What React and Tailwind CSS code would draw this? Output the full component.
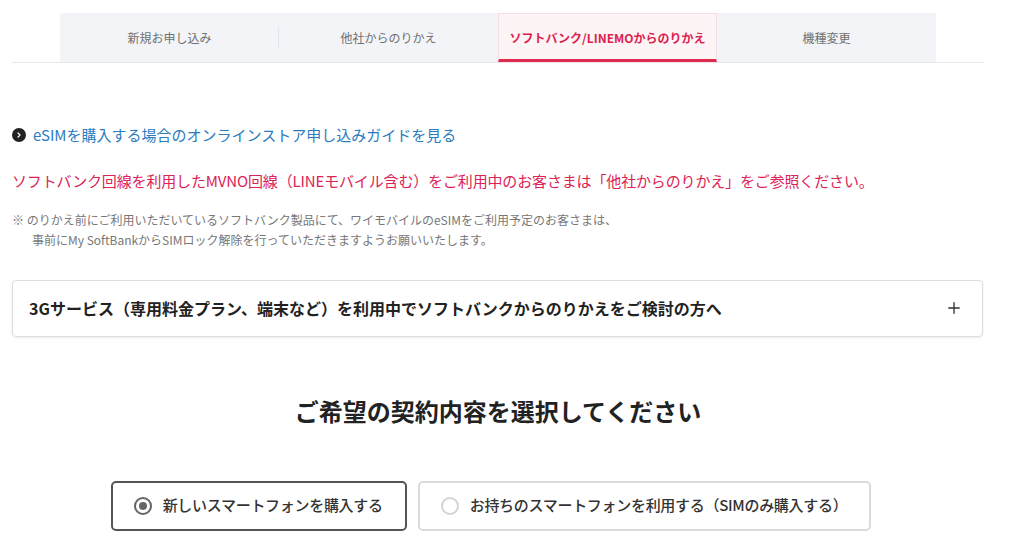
import { Plus } from 'lucide-react';

const TABS = [
  { key: 'new', label: '新規お申し込み' },
  { key: 'mnp', label: '他社からのりかえ' },
  { key: 'sb', label: 'ソフトバンク/LINEMOからのりかえ', active: true },
  { key: 'change', label: '機種変更' },
];

const FONT = { fontFamily: '"Noto Sans CJK JP", "Noto Sans", sans-serif' };

function Tabs() {
  return (
    <div className="border-b border-[#e6e8eb]">
      <ul className="mx-[48px] flex h-[49px] bg-[#f2f4f7]">
        {TABS.map((tab, i) => (
          <li key={tab.key} className="relative flex-1">
            {tab.active ? (
              <div className="flex h-full items-center justify-center border-x border-t border-[#f5dfe4] border-b-[3px] border-b-[#e0294f] bg-[#fdf4f5] pt-[2px] text-[12px] font-bold text-[#dc2350]">
                {tab.label}
              </div>
            ) : (
              <div className="flex h-full items-center justify-center text-[12px] text-[#707070]">{tab.label}</div>
            )}
            {i === 0 ? <span className="absolute right-0 top-[15px] h-[19px] w-px bg-[#dfe2e6]" aria-hidden /> : null}
          </li>
        ))}
      </ul>
    </div>
  );
}

function Radio({ checked, label }) {
  return (
    <label
      className={
        'flex h-[50px] items-center gap-[11px] whitespace-nowrap rounded-[5px] border-2 pl-[21px] pr-[22px] ' +
        (checked ? 'border-[#555]' : 'border-[#dadada]')
      }
    >
      <span
        className={
          'flex size-[18px] shrink-0 items-center justify-center rounded-full border-2 ' +
          (checked ? 'border-[#666]' : 'border-[#d4d4d4]')
        }
      >
        {checked ? <span className="size-[8px] rounded-full bg-[#666]" /> : null}
      </span>
      <span className="text-[15px] font-medium tracking-[-0.02em] text-[#333]">{label}</span>
    </label>
  );
}

export default function App() {
  return (
    <div className="min-h-[556px] bg-white pt-[13px]" style={FONT}>
      <div className="mx-[12px] w-[972px]">
        <Tabs />

        <a className="mt-[61px] flex items-center gap-[7px] text-[15px] text-[#2a7cbf]">
          <span className="flex size-[14px] items-center justify-center rounded-full bg-[#222]">
            <svg viewBox="0 0 10 10" className="size-[8px]" aria-hidden>
              <path d="M3.8 2.5 6.3 5 3.8 7.5" fill="none" stroke="white" strokeWidth="1.5" strokeLinecap="round" strokeLinejoin="round" />
            </svg>
          </span>
          eSIMを購入する場合のオンラインストア申し込みガイドを見る
        </a>

        <p className="mt-[23px] text-[15px] leading-[22px] tracking-[-0.01em] text-[#dc2356]">
          ソフトバンク回線を利用したMVNO回線（LINEモバイル含む）をご利用中のお客さまは「他社からのりかえ」をご参照ください。
        </p>

        <div className="mt-[18px] text-[12px] leading-[20px] text-[#777]">
          <p>※ のりかえ前にご利用いただいているソフトバンク製品にて、ワイモバイルのeSIMをご利用予定のお客さまは、</p>
          <p className="pl-[20px]">事前にMy SoftBankからSIMロック解除を行っていただきますようお願いいたします。</p>
        </div>

        <button className="mt-[30px] flex h-[57px] w-[971px] items-center justify-between rounded-[4px] border border-[#dedede] pl-[16px] pr-[19px] text-left shadow-[0_1px_3px_rgba(0,0,0,0.08)]">
          <span className="text-[16px] font-semibold text-[#222]">
            3Gサービス（専用料金プラン、端末など）を利用中でソフトバンクからのりかえをご検討の方へ
          </span>
          <Plus className="size-[18px] text-[#333]" strokeWidth={1.8} aria-hidden />
        </button>

        <h2 className="mt-[56px] text-center text-[24px] font-bold text-[#222]">ご希望の契約内容を選択してください</h2>

        <div className="mt-[52px] flex justify-center gap-[11px] pr-[14px]">
          <Radio checked label="新しいスマートフォンを購入する" />
          <Radio label="お持ちのスマートフォンを利用する（SIMのみ購入する）" />
        </div>
      </div>
    </div>
  );
}
